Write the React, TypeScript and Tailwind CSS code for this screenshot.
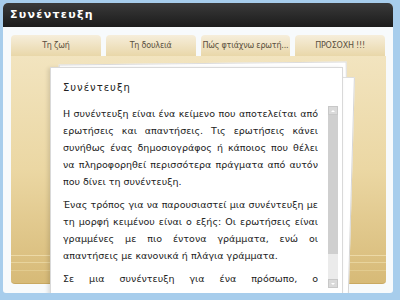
const paragraphs: string[][] = [
    [
        'Η συνέντευξη είναι ένα κείμενο που αποτελείται από',
        'ερωτήσεις και απαντήσεις. Τις ερωτήσεις κάνει',
        'συνήθως ένας δημοσιογράφος ή κάποιος που θέλει',
        'να πληροφορηθεί περισσότερα πράγματα από αυτόν',
        'που δίνει τη συνέντευξη.',
    ],
    [
        'Ένας τρόπος για να παρουσιαστεί μια συνέντευξη με',
        'τη μορφή κειμένου είναι ο εξής: Οι ερωτήσεις είναι',
        'γραμμένες με πιο έντονα γράμματα, ενώ οι',
        'απαντήσεις με κανονικά ή πλάγια γράμματα.',
    ],
    [
        'Σε μια συνέντευξη για ένα πρόσωπο, ο',
    ],
];

const tabs = ['Τη ζωή', 'Τη δουλειά', 'Πώς φτιάχνω ερωτή...', 'ΠΡΟΣΟΧΗ !!!'];

const App = () => {
    return (
        <div className="w-[400px] h-[300px] bg-[#a7cdec] pl-[3px] pt-[3px] overflow-hidden font-['DejaVu_Sans',sans-serif]">
            <div className="relative w-[390px] h-[290px] rounded-t-[5px] rounded-b-[3px] overflow-hidden flex flex-col bg-[#f7fafc]">
                {/* title bar */}
                <div className="h-[24px] shrink-0 bg-gradient-to-b from-[#3a3a3a] to-[#1c1c1c] flex items-center px-[7px]">
                    <span className="text-white text-[11px] font-bold tracking-[1.3px]">Συνέντευξη</span>
                </div>

                <div className="flex-1 flex flex-col px-[8px] pt-[8px] pb-[9px]">
                    {/* tabs */}
                    <div className="flex gap-[5px] h-[21px] shrink-0">
                        {tabs.map(t => (
                            <div
                                key={t}
                                className="w-[90px] rounded-t-[4px] bg-gradient-to-b from-[#f6eedb] to-[#e9d7a9] flex items-center justify-center text-[8px] text-[#5a5040] tracking-[-0.2px] whitespace-nowrap"
                            >
                                {t}
                            </div>
                        ))}
                    </div>

                    {/* gold panel */}
                    <div className="w-[375px] flex-1 rounded-b-[4px] bg-gradient-to-b from-[#f2e4bf] via-[#ebd7a3] to-[#d7ba77] flex flex-col justify-end pb-[12px] border-b border-[#c9a962]">
                        <div className="h-px bg-[#ecd9a6] mb-[6px]" />
                        <div className="h-px bg-[#e8d49d] mb-[7px]" />
                        <div className="h-px bg-[#e2cb8f]" />
                    </div>
                </div>

                {/* paper stack */}
                <div className="absolute left-[57px] top-[60px] w-[288px] h-[260px] bg-white border border-[#dcdcdc] rotate-[-0.6deg]" />
                <div className="absolute left-[60px] top-[66px] w-[292px] h-[260px] bg-white border border-[#d6d6d6] rotate-[1.6deg] origin-top-left" />

                <div className="absolute left-[47px] top-[64px] w-[293px] h-[260px] bg-white border border-[#d9d9d9] shadow-[-2px_1px_4px_rgba(0,0,0,0.12)]">
                    <div className="absolute left-[12px] top-[12px] text-[10px] tracking-[1px] text-[#222]">Συνέντευξη</div>

                    <div className="absolute left-[12px] top-[37px] w-[255px] h-[184px] overflow-hidden text-[9.5px] leading-[17px] text-[#222]">
                        {paragraphs.map((p, i) => (
                            <div key={i} className="mb-[6px]">
                                {p.map((line, j) => (
                                    <div
                                        key={j}
                                        className={j === p.length - 1 && i !== 2 ? 'text-left' : 'text-justify [text-align-last:justify]'}
                                    >
                                        {line}
                                    </div>
                                ))}
                            </div>
                        ))}
                    </div>

                    {/* scrollbar */}
                    <div className="absolute left-[277px] top-[38px] w-[10px] h-[182px] bg-[#ebebeb] flex flex-col">
                        <div className="h-[9px] bg-[#dadada] border border-[#c8c8c8] flex items-center justify-center">
                            <div className="w-0 h-0 border-x-[2px] border-x-transparent border-b-[2px] border-b-white" />
                        </div>
                        <div className="h-[139px] bg-[#cfcfcf]" />
                        <div className="flex-1" />
                        <div className="h-[9px] bg-[#dadada] border border-[#c8c8c8] flex items-center justify-center">
                            <div className="w-0 h-0 border-x-[2px] border-x-transparent border-t-[2px] border-t-white" />
                        </div>
                    </div>
                </div>
            </div>
        </div>
    );
};

export default App;
